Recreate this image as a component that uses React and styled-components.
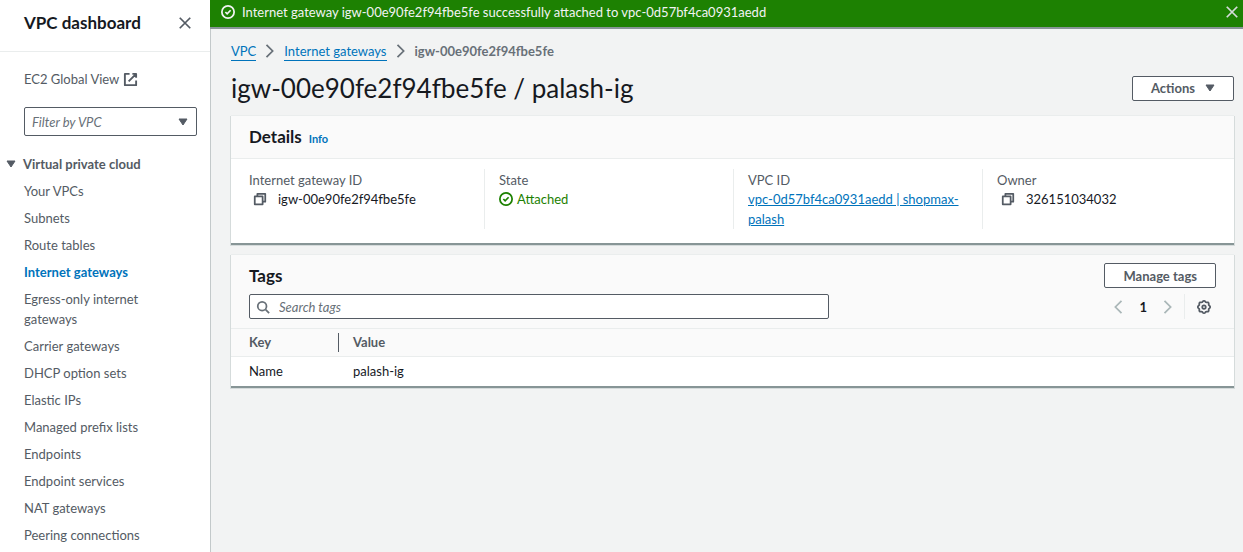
import React from "react";
import styled, { createGlobalStyle } from "styled-components";

const color = {
  text: "#16191f",
  muted: "#545b64",
  soft: "#687078",
  link: "#0073bb",
  green: "#1d8102",
  line: "#eaeded",
  page: "#f2f3f3",
  panel: "#fafafa",
  edge: "#879596",
};

const GlobalStyle = createGlobalStyle`
  *, *::before, *::after { box-sizing: border-box; }
  body {
    margin: 0;
    background: ${color.page};
    color: ${color.text};
    font: 13px/20px Lato, "Noto Sans", sans-serif;
  }
  h1, h2, h3, p, ul, dl, dd { margin: 0; padding: 0; }
  button, input, select { font: inherit; color: inherit; }
  svg { display: block; flex: none; }
`;

const Layout = styled.div`
  display: flex;
  min-height: 100vh;
`;

const Sidebar = styled.nav`
  flex: none;
  width: 210px;
  background: #fff;
`;

const SidebarHeader = styled.header`
  display: flex;
  align-items: center;
  justify-content: space-between;
  padding: 11px 18px 16px 24px;
  border-bottom: 1px solid ${color.line};
`;

const SidebarTitle = styled.h2`
  font-size: 17px;
  line-height: 24px;
`;

const IconButton = styled.button`
  display: flex;
  padding: 0;
  border: 0;
  background: none;
  color: ${(p) => p.$color || color.muted};
  cursor: pointer;
`;

const SidebarTools = styled.div`
  display: flex;
  flex-direction: column;
  gap: 18px;
  padding: 17px 13px 18px 24px;
`;

const ExternalLink = styled.a`
  display: flex;
  align-items: center;
  gap: 4px;
  color: ${color.muted};
  text-decoration: none;
`;

const SelectBox = styled.label`
  display: grid;
  align-items: center;
  color: ${color.muted};
  > * { grid-area: 1 / 1; }
  > svg { justify-self: end; margin-right: 9px; pointer-events: none; }
`;

const Select = styled.select`
  appearance: none;
  height: 29px;
  width: 100%;
  padding: 0 7px;
  border: 1px solid ${color.muted};
  border-radius: 2px;
  background: #fff;
  color: ${color.soft};
  font-style: italic;
`;

const SectionToggle = styled.button`
  display: flex;
  align-items: center;
  gap: 7px;
  padding: 0 6px;
  border: 0;
  background: none;
  color: ${color.muted};
  font-weight: 700;
  cursor: pointer;
`;

const NavList = styled.ul`
  display: flex;
  flex-direction: column;
  gap: 7px;
  padding: 7px 48px 8px 24px;
  list-style: none;
`;

const NavLink = styled.a`
  display: block;
  color: ${(p) => (p.$active ? color.link : color.muted)};
  font-weight: ${(p) => (p.$active ? 700 : 400)};
  text-decoration: none;
`;

const Main = styled.main`
  display: flex;
  flex-direction: column;
  flex: 1;
  min-width: 0;
`;

const Flash = styled.div`
  display: flex;
  align-items: center;
  gap: 7px;
  padding: 2px 4px 5px 11px;
  border-bottom: 2px solid ${color.edge};
  background: ${color.green};
  color: ${color.page};
`;

const FlashText = styled.p`
  flex: 1;
`;

const Content = styled.div`
  display: flex;
  flex: 1;
  flex-direction: column;
  padding: 12px 9px 20px 20px;
  border-left: 1px solid #c3c9ca;
`;

const Breadcrumbs = styled.nav`
  display: flex;
  align-items: center;
  gap: 7px;
  color: ${color.soft};
`;

const Crumb = styled.a`
  color: ${color.link};
  line-height: 18px;
  border-bottom: 1px solid ${color.link};
  text-decoration: none;
`;

const CurrentCrumb = styled.span`
  font-weight: 700;
`;

const TitleRow = styled.div`
  display: flex;
  align-items: center;
  justify-content: space-between;
  padding: 12px 0;
`;

const PageTitle = styled.h1`
  font-size: 26px;
  line-height: 30px;
  font-weight: 400;
`;

const Button = styled.button`
  display: flex;
  align-items: center;
  gap: 10px;
  height: 25px;
  padding: 0 18px;
  border: 1px solid ${color.muted};
  border-radius: 2px;
  background: #fff;
  color: ${color.muted};
  font-weight: 700;
  cursor: pointer;
`;

const Card = styled.section`
  margin-bottom: 9px;
  border-top: 1px solid ${color.line};
  border-bottom: 2px solid ${color.edge};
  background: #fff;
  box-shadow: -1px 1px 0 #d5dbdb, 1px 1px 0 #d5dbdb;
`;

const CardHeader = styled.header`
  display: flex;
  flex-direction: column;
  gap: 6px;
  padding: 8px 18px 9px;
  border-bottom: 1px solid ${color.line};
  background: ${color.panel};
`;

const HeaderRow = styled.div`
  display: flex;
  align-items: ${(p) => (p.$start ? "baseline" : "center")};
  justify-content: ${(p) => (p.$start ? "flex-start" : "space-between")};
  gap: 7px;
`;

const CardTitle = styled.h2`
  font-size: 17px;
  line-height: 25px;
`;

const InfoLink = styled.a`
  color: ${color.link};
  font-size: 11px;
  font-weight: 700;
  text-decoration: none;
`;

const Fields = styled.dl`
  display: grid;
  grid-template-columns: repeat(4, minmax(0, 1fr));
  padding: 10px 3px 14px 4px;
`;

const Field = styled.div`
  padding: 2px 14px 0;
  border-left: 1px solid ${color.line};
  &:first-child { border-left: 0; }
`;

const FieldLabel = styled.dt`
  color: ${color.muted};
  line-height: 18px;
`;

const FieldValue = styled.dd`
  display: flex;
  align-items: center;
  gap: ${(p) => (p.$copy ? 11 : 4)}px;
  padding-left: ${(p) => (p.$copy ? 4 : 0)}px;
  color: ${(p) => (p.$success ? color.green : color.text)};
`;

const ResourceLink = styled.a`
  color: ${color.link};
`;

const SearchBox = styled.label`
  display: flex;
  align-items: center;
  gap: 9px;
  width: 60%;
  height: 25px;
  padding: 0 6px;
  border: 1px solid ${color.muted};
  border-radius: 2px;
  background: #fff;
  color: ${color.soft};
`;

const SearchInput = styled.input`
  flex: 1;
  min-width: 0;
  padding: 0;
  border: 0;
  outline: 0;
  background: none;
  &::placeholder { color: ${color.soft}; font-style: italic; opacity: 1; }
`;

const Pagination = styled.div`
  display: flex;
  align-items: center;
`;

const Pages = styled.div`
  display: flex;
  align-items: center;
  gap: 14px;
  height: 25px;
  padding-right: 9px;
  margin-right: 12px;
  border-right: 1px solid ${color.line};
`;

const PageNumber = styled.button`
  padding: 0;
  border: 0;
  background: none;
  color: ${color.text};
  font-weight: 700;
`;

const Settings = styled.div`
  padding-right: 5px;
`;

const Table = styled.table`
  width: 100%;
  border-collapse: collapse;
  text-align: left;
`;

const HeadCell = styled.th`
  width: ${(p) => (p.$narrow ? "108px" : "auto")};
  padding: 4px 0 4px ${(p) => (p.$narrow ? 18 : 14)}px;
  border-bottom: 1px solid ${color.line};
  background: ${color.panel};
  color: ${color.muted};
`;

const HeadLabel = styled.div`
  line-height: 19px;
  border-right: ${(p) => (p.$divided ? `1px solid ${color.muted}` : "0")};
`;

const Cell = styled.td`
  padding: 4px 0 5px ${(p) => (p.$first ? 18 : 14)}px;
`;

const Icon = ({ size = 14, width = 2, children }) => (
  <svg width={size} height={size} viewBox="0 0 16 16" fill="none" stroke="currentColor" strokeWidth={width} aria-hidden="true">
    {children}
  </svg>
);
const CloseIcon = () => <Icon><path d="m2 2 12 12M14 2 2 14" /></Icon>;
const CheckIcon = () => <Icon><circle cx="8" cy="8" r="7" /><path d="m5 8 2 2 4-4" /></Icon>;
const ExternalIcon = () => <Icon size={15}><path d="M7 2H2v12h12V9M10 2h4v4M14 2 6 10" strokeLinejoin="round" /></Icon>;
const CopyIcon = () => <Icon><path d="M2 5h9v9H2zM5 5V2h9v9h-3" strokeLinejoin="round" /></Icon>;
const SearchIcon = () => <Icon><circle cx="7" cy="7" r="5" /><path d="m11 11 4 4" /></Icon>;
const NextIcon = () => <Icon><path d="m4 1 7 7-7 7" /></Icon>;
const PrevIcon = () => <Icon><path d="m12 1-7 7 7 7" /></Icon>;
const CaretIcon = () => (
  <svg width="10" height="8" viewBox="0 0 10 8" aria-hidden="true">
    <path d="M1 1h8L5 7z" fill="currentColor" stroke="currentColor" strokeLinejoin="round" />
  </svg>
);

const gearOutline = Array.from({ length: 64 }, (_, i) => {
  const angle = (i / 64) * Math.PI * 2;
  const radius = 6.5 + 0.6 * Math.cos(angle * 8);
  return `${(8 + radius * Math.cos(angle)).toFixed(2)},${(8 + radius * Math.sin(angle)).toFixed(2)}`;
}).join(" ");
const GearIcon = () => (
  <Icon>
    <polygon points={gearOutline} strokeLinejoin="round" />
    <circle cx="8" cy="8" r="2" />
  </Icon>
);

const links = [
  "Your VPCs", "Subnets", "Route tables", "Internet gateways", "Egress-only internet gateways",
  "Carrier gateways", "DHCP option sets", "Elastic IPs", "Managed prefix lists", "Endpoints",
  "Endpoint services", "NAT gateways", "Peering connections",
];

export default function App() {
  return (
    <>
      <GlobalStyle />
      <Layout>
        <Sidebar aria-label="VPC">
          <SidebarHeader>
            <SidebarTitle>VPC dashboard</SidebarTitle>
            <IconButton aria-label="Close navigation"><CloseIcon /></IconButton>
          </SidebarHeader>
          <SidebarTools>
            <ExternalLink href="#global">EC2 Global View <ExternalIcon /></ExternalLink>
            <SelectBox>
              <Select aria-label="Filter by VPC"><option>Filter by VPC</option></Select>
              <CaretIcon />
            </SelectBox>
          </SidebarTools>
          <SectionToggle aria-expanded="true"><CaretIcon />Virtual private cloud</SectionToggle>
          <NavList>
            {links.map((name) => (
              <li key={name}>
                <NavLink href="#nav" $active={name === "Internet gateways"}>{name}</NavLink>
              </li>
            ))}
          </NavList>
        </Sidebar>
        <Main>
          <Flash role="status">
            <CheckIcon />
            <FlashText>Internet gateway igw-00e90fe2f94fbe5fe successfully attached to vpc-0d57bf4ca0931aedd</FlashText>
            <IconButton $color="#d5dbdb" aria-label="Dismiss"><CloseIcon /></IconButton>
          </Flash>
          <Content>
            <Breadcrumbs aria-label="Breadcrumbs">
              <Crumb href="#vpc">VPC</Crumb>
              <NextIcon />
              <Crumb href="#gateways">Internet gateways</Crumb>
              <NextIcon />
              <CurrentCrumb>igw-00e90fe2f94fbe5fe</CurrentCrumb>
            </Breadcrumbs>
            <TitleRow>
              <PageTitle>igw-00e90fe2f94fbe5fe / palash-ig</PageTitle>
              <Button>Actions <CaretIcon /></Button>
            </TitleRow>
            <Card>
              <CardHeader>
                <HeaderRow $start>
                  <CardTitle>Details</CardTitle>
                  <InfoLink href="#info">Info</InfoLink>
                </HeaderRow>
              </CardHeader>
              <Fields>
                <Field>
                  <FieldLabel>Internet gateway ID</FieldLabel>
                  <FieldValue $copy>
                    <IconButton aria-label="Copy gateway ID"><CopyIcon /></IconButton>igw-00e90fe2f94fbe5fe
                  </FieldValue>
                </Field>
                <Field>
                  <FieldLabel>State</FieldLabel>
                  <FieldValue $success><CheckIcon />Attached</FieldValue>
                </Field>
                <Field>
                  <FieldLabel>VPC ID</FieldLabel>
                  <FieldValue>
                    <ResourceLink href="#vpc">vpc-0d57bf4ca0931aedd | shopmax-palash</ResourceLink>
                  </FieldValue>
                </Field>
                <Field>
                  <FieldLabel>Owner</FieldLabel>
                  <FieldValue $copy>
                    <IconButton aria-label="Copy owner"><CopyIcon /></IconButton>326151034032
                  </FieldValue>
                </Field>
              </Fields>
            </Card>
            <Card>
              <CardHeader>
                <HeaderRow>
                  <CardTitle>Tags</CardTitle>
                  <Button>Manage tags</Button>
                </HeaderRow>
                <HeaderRow>
                  <SearchBox>
                    <SearchIcon />
                    <SearchInput placeholder="Search tags" aria-label="Search tags" />
                  </SearchBox>
                  <Pagination>
                    <Pages>
                      <IconButton $color="#aab7b8" aria-label="Previous page"><PrevIcon /></IconButton>
                      <PageNumber>1</PageNumber>
                      <IconButton $color="#aab7b8" aria-label="Next page"><NextIcon /></IconButton>
                    </Pages>
                    <Settings>
                      <IconButton aria-label="Preferences"><GearIcon /></IconButton>
                    </Settings>
                  </Pagination>
                </HeaderRow>
              </CardHeader>
              <Table>
                <thead>
                  <tr>
                    <HeadCell $narrow><HeadLabel $divided>Key</HeadLabel></HeadCell>
                    <HeadCell><HeadLabel>Value</HeadLabel></HeadCell>
                  </tr>
                </thead>
                <tbody>
                  <tr>
                    <Cell $first>Name</Cell>
                    <Cell>palash-ig</Cell>
                  </tr>
                </tbody>
              </Table>
            </Card>
          </Content>
        </Main>
      </Layout>
    </>
  );
}
